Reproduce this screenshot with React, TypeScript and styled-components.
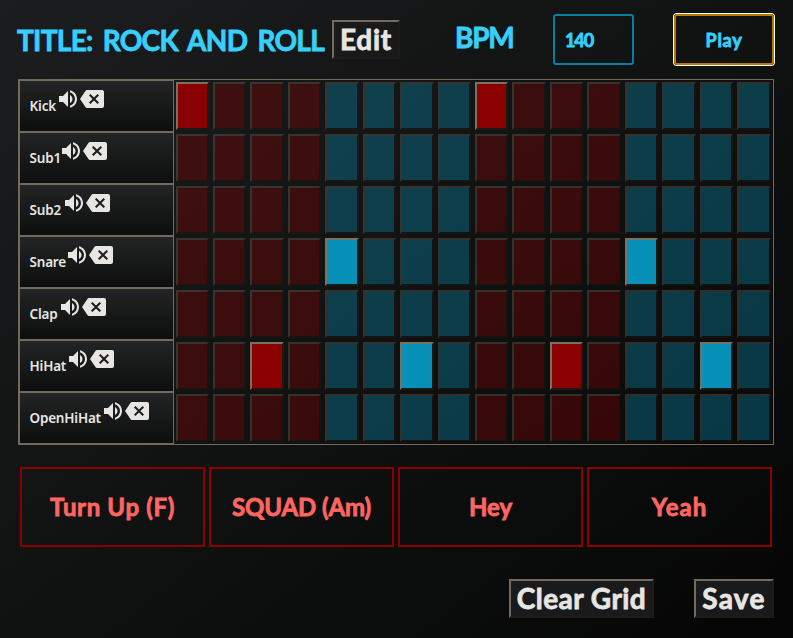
import React, { useState } from 'react';
import styled, { createGlobalStyle, css } from 'styled-components';

const GlobalStyle = createGlobalStyle`
  *, *::before, *::after { box-sizing: border-box; }
  html, body { margin: 0; padding: 0; background: #0a0b0b; }
  body { overflow: hidden; }
  button, input { font: inherit; color: inherit; margin: 0; }
`;

const display = css`
  font-family: Lato, 'Open Sans', sans-serif;
  font-weight: 700;
  white-space: nowrap;
  -webkit-text-stroke: 0.8px currentColor;
  stroke-linejoin: round;
`;

const Page = styled.main`
  display: flex;
  flex-direction: column;
  width: 793px;
  height: 638px;
  padding: 13px 19px 0 18px;
  background: linear-gradient(to bottom right, #1b1d1e 0%, #101212 50%, #050505 100%);
  color: #e8e6e3;
`;

const Header = styled.header`
  display: flex;
  align-items: flex-start;
  height: 66px;
`;

const Title = styled.h1`
  ${display}
  width: 315px;
  margin: 10px 0 0 -1px;
  font-size: 28px;
  line-height: 34px;
  letter-spacing: -0.7px;
  word-spacing: 4px;
  color: #35d0fb;
`;

const Tempo = styled.label`
  ${display}
  width: 98px;
  margin: 7px 0 0 55px;
  font-size: 28px;
  line-height: 34px;
  letter-spacing: -1.3px;
  color: #35d0fb;
`;

const TempoInput = styled.input`
  ${display}
  width: 81px;
  height: 51px;
  margin-top: 1px;
  padding: 0 10px;
  border: 2px solid #087f9f;
  border-radius: 3px;
  outline: none;
  background: transparent;
  color: #35d0fb;
  font-size: 18px;
  letter-spacing: -1.1px;
`;

const PlayButton = styled.button`
  ${display}
  width: 100px;
  height: 51px;
  margin: 1px 0 0 40px;
  padding: 0;
  border: 2px solid #b87900;
  border-radius: 3px;
  box-shadow: 0 0 0 1px #fff;
  background: transparent;
  color: #35d0fb;
  font-size: 18px;
  letter-spacing: 0.7px;
`;

const RaisedButton = styled.button<{ $width: number; $top?: number; $track?: number; $fill: string }>`
  ${display}
  flex: none;
  width: ${(p) => p.$width}px;
  height: 39px;
  margin-top: ${(p) => p.$top ?? 0}px;
  padding: 0 0 1px;
  border: 2px solid;
  border-color: #73695d #1e1b18 #1e1b18 #73695d;
  background: ${(p) => p.$fill};
  color: #e8e6e3;
  font-size: 28px;
  line-height: 34px;
  letter-spacing: ${(p) => p.$track ?? 0}px;
`;

const Sequencer = styled.section`
  width: 756px;
  border: 1px solid #73695d;
`;

const TrackRow = styled.div`
  display: grid;
  grid-template-columns: 154.55px repeat(16, 37.44px);
  height: 52px;
`;

const TrackHeader = styled.div`
  display: flex;
  align-items: flex-start;
  width: 155px;
  padding: 6px 0 0 9.5px;
  border: 1px solid #73695d;
  background: linear-gradient(#222425, #0d0f0e);
`;

const TrackName = styled.span<{ $width: number }>`
  width: ${(p) => p.$width + 0.5}px;
  margin-top: 9px;
  font: 600 13.5px/20px 'Noto Sans', 'Open Sans', sans-serif;
  letter-spacing: -0.2px;
  white-space: nowrap;
`;

const Glyph = styled.svg`
  flex: none;
  display: block;
  width: 24px;
  height: 24px;
  fill: #e8e6e3;
`;

const Step = styled.button<{ $tone: 'red' | 'blue'; $on: boolean }>`
  min-width: 0;
  margin: 2px;
  padding: 0;
  border: 2px solid;
  border-color: #7c7061 #1b1815 #1b1815 #7c7061;
  background: ${(p) => (p.$tone === 'red' ? '#8b0000' : '#0891b8')};
  background-clip: padding-box;
  opacity: ${(p) => (p.$on ? 1 : 0.34)};
`;

const Pads = styled.div`
  display: grid;
  grid-template-columns: repeat(4, 185px);
  gap: 4px;
  margin: 22px 0 0 2px;
`;

const Pad = styled.button<{ $track: number }>`
  ${display}
  height: 80px;
  padding: 0 0 1px;
  border: 2px solid #8b0000;
  background: transparent;
  color: #ff6561;
  font-size: 24px;
  letter-spacing: ${(p) => p.$track}px;
`;

const Actions = styled.footer`
  display: flex;
  justify-content: flex-end;
  gap: 40px;
  margin-top: 32px;
`;

const tracks = [
  { name: 'Kick', width: 26, on: [0, 8] },
  { name: 'Sub1', width: 29, on: [] },
  { name: 'Sub2', width: 32, on: [] },
  { name: 'Snare', width: 35, on: [4, 12] },
  { name: 'Clap', width: 28, on: [] },
  { name: 'HiHat', width: 36, on: [2, 6, 10, 14] },
  { name: 'OpenHiHat', width: 71, on: [] },
];

const pads = [
  { name: 'Turn Up (F)', track: 0.65 },
  { name: 'SQUAD (Am)', track: -0.1 },
  { name: 'Hey', track: 0 },
  { name: 'Yeah', track: 1 },
];

const VolumeIcon = () => (
  <Glyph viewBox="0 0 24 24">
    <path d="M3 9v6h4l5 5V4L7 9H3zm13.5 3c0-1.77-1.02-3.29-2.5-4.03v8.05c1.48-.73 2.5-2.25 2.5-4.02zM14 3.23v2.06c2.89.86 5 3.54 5 6.71s-2.11 5.85-5 6.71v2.06c4.01-.91 7-4.49 7-8.77s-2.99-7.86-7-8.77z" />
  </Glyph>
);

const BackspaceIcon = () => (
  <Glyph viewBox="0 0 24 24">
    <path d="M22 3H7c-.69 0-1.23.35-1.59.88L0 12l5.41 8.11c.36.53.9.89 1.59.89h15c1.1 0 2-.9 2-2V5c0-1.1-.9-2-2-2zm-3 12.59L17.59 17 14 13.41 10.41 17 9 15.59 12.59 12 9 8.41 10.41 7 14 10.59 17.59 7 19 8.41 15.41 12 19 15.59z" />
  </Glyph>
);

export default function App() {
  const [grid, setGrid] = useState(() =>
    tracks.map((t) => Array.from({ length: 16 }, (_, i) => (t.on as number[]).includes(i))),
  );
  const [bpm, setBpm] = useState('140');
  const toggle = (row: number, step: number) =>
    setGrid((g) => g.map((r, i) => (i === row ? r.map((v, j) => (j === step ? !v : v)) : r)));

  return (
    <>
      <GlobalStyle />
      <Page>
        <Header>
          <Title>TITLE: ROCK AND ROLL</Title>
          <RaisedButton $width={68} $top={7} $track={0.7} $fill="#191919">Edit</RaisedButton>
          <Tempo htmlFor="bpm">BPM</Tempo>
          <TempoInput id="bpm" value={bpm} onChange={(e) => setBpm(e.target.value)} />
          <PlayButton>Play</PlayButton>
        </Header>
        <Sequencer>
          {tracks.map((track, row) => (
            <TrackRow key={track.name}>
              <TrackHeader>
                <TrackName $width={track.width}>{track.name}</TrackName>
                <VolumeIcon />
                <BackspaceIcon />
              </TrackHeader>
              {grid[row].map((on, step) => (
                <Step
                  key={step}
                  $tone={Math.floor(step / 4) % 2 ? 'blue' : 'red'}
                  $on={on}
                  onClick={() => toggle(row, step)}
                />
              ))}
            </TrackRow>
          ))}
        </Sequencer>
        <Pads>
          {pads.map((pad) => (
            <Pad key={pad.name} $track={pad.track}>{pad.name}</Pad>
          ))}
        </Pads>
        <Actions>
          <RaisedButton
            $width={145}
            $track={0.45}
            $fill="#181a1b"
            onClick={() => setGrid(tracks.map(() => Array(16).fill(false)))}
          >
            Clear Grid
          </RaisedButton>
          <RaisedButton $width={80} $track={1.3} $fill="#181a1b">Save</RaisedButton>
        </Actions>
      </Page>
    </>
  );
}
